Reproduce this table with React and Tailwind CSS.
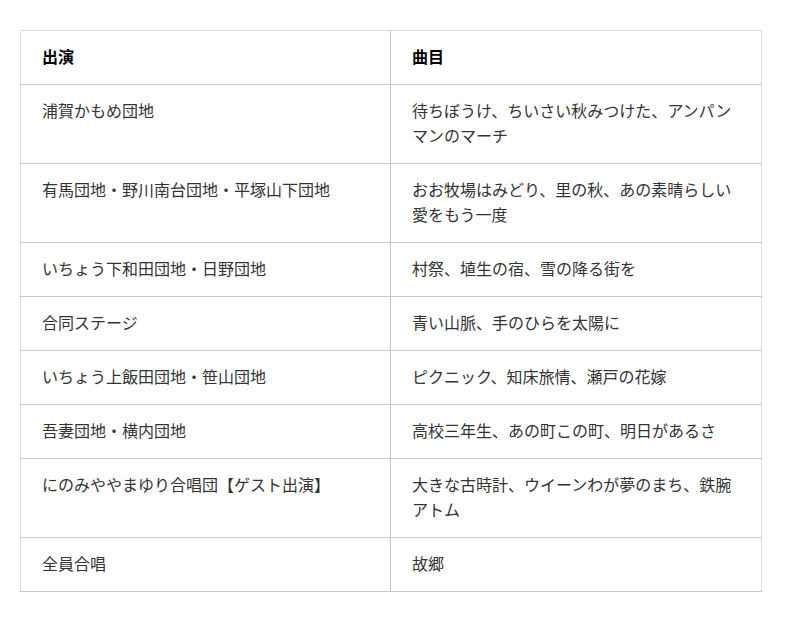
const rows = [
  ['浦賀かもめ団地', '待ちぼうけ、ちいさい秋みつけた、アンパンマンのマーチ'],
  ['有馬団地・野川南台団地・平塚山下団地', 'おお牧場はみどり、里の秋、あの素晴らしい愛をもう一度'],
  ['いちょう下和田団地・日野団地', '村祭、埴生の宿、雪の降る街を'],
  ['合同ステージ', '青い山脈、手のひらを太陽に'],
  ['いちょう上飯田団地・笹山団地', 'ピクニック、知床旅情、瀬戸の花嫁'],
  ['吾妻団地・横内団地', '高校三年生、あの町この町、明日があるさ'],
  ['にのみややまゆり合唱団【ゲスト出演】', '大きな古時計、ウイーンわが夢のまち、鉄腕アトム'],
  ['全員合唱', '故郷'],
];

export default function App() {
  return (
    <div className="min-h-[622px] bg-white pt-[30px] pl-[20px] font-['Noto_Sans_CJK_JP','Noto_Sans',sans-serif] text-[16px] leading-[25px] text-[#333]">
      <table className="w-[742px] table-fixed border-collapse border border-[#dddddd]">
        <thead>
          <tr className="border-b border-[#c8c8c8]">
            <th className="w-[370px] border-r border-[#c8c8c8] px-[21px] pt-[13px] pb-[15px] text-left font-bold text-black">出演</th>
            <th className="px-[21px] pt-[13px] pb-[15px] text-left font-bold text-black">曲目</th>
          </tr>
        </thead>
        <tbody>
          {rows.map(([who, songs]) => (
            <tr key={who} className="border-b border-[#c8c8c8] align-top">
              <td className="border-r border-[#c8c8c8] px-[21px] pt-[13px] pb-[15px]">{who}</td>
              <td className="px-[21px] pt-[13px] pb-[15px]">{songs}</td>
            </tr>
          ))}
        </tbody>
      </table>
    </div>
  );
}
